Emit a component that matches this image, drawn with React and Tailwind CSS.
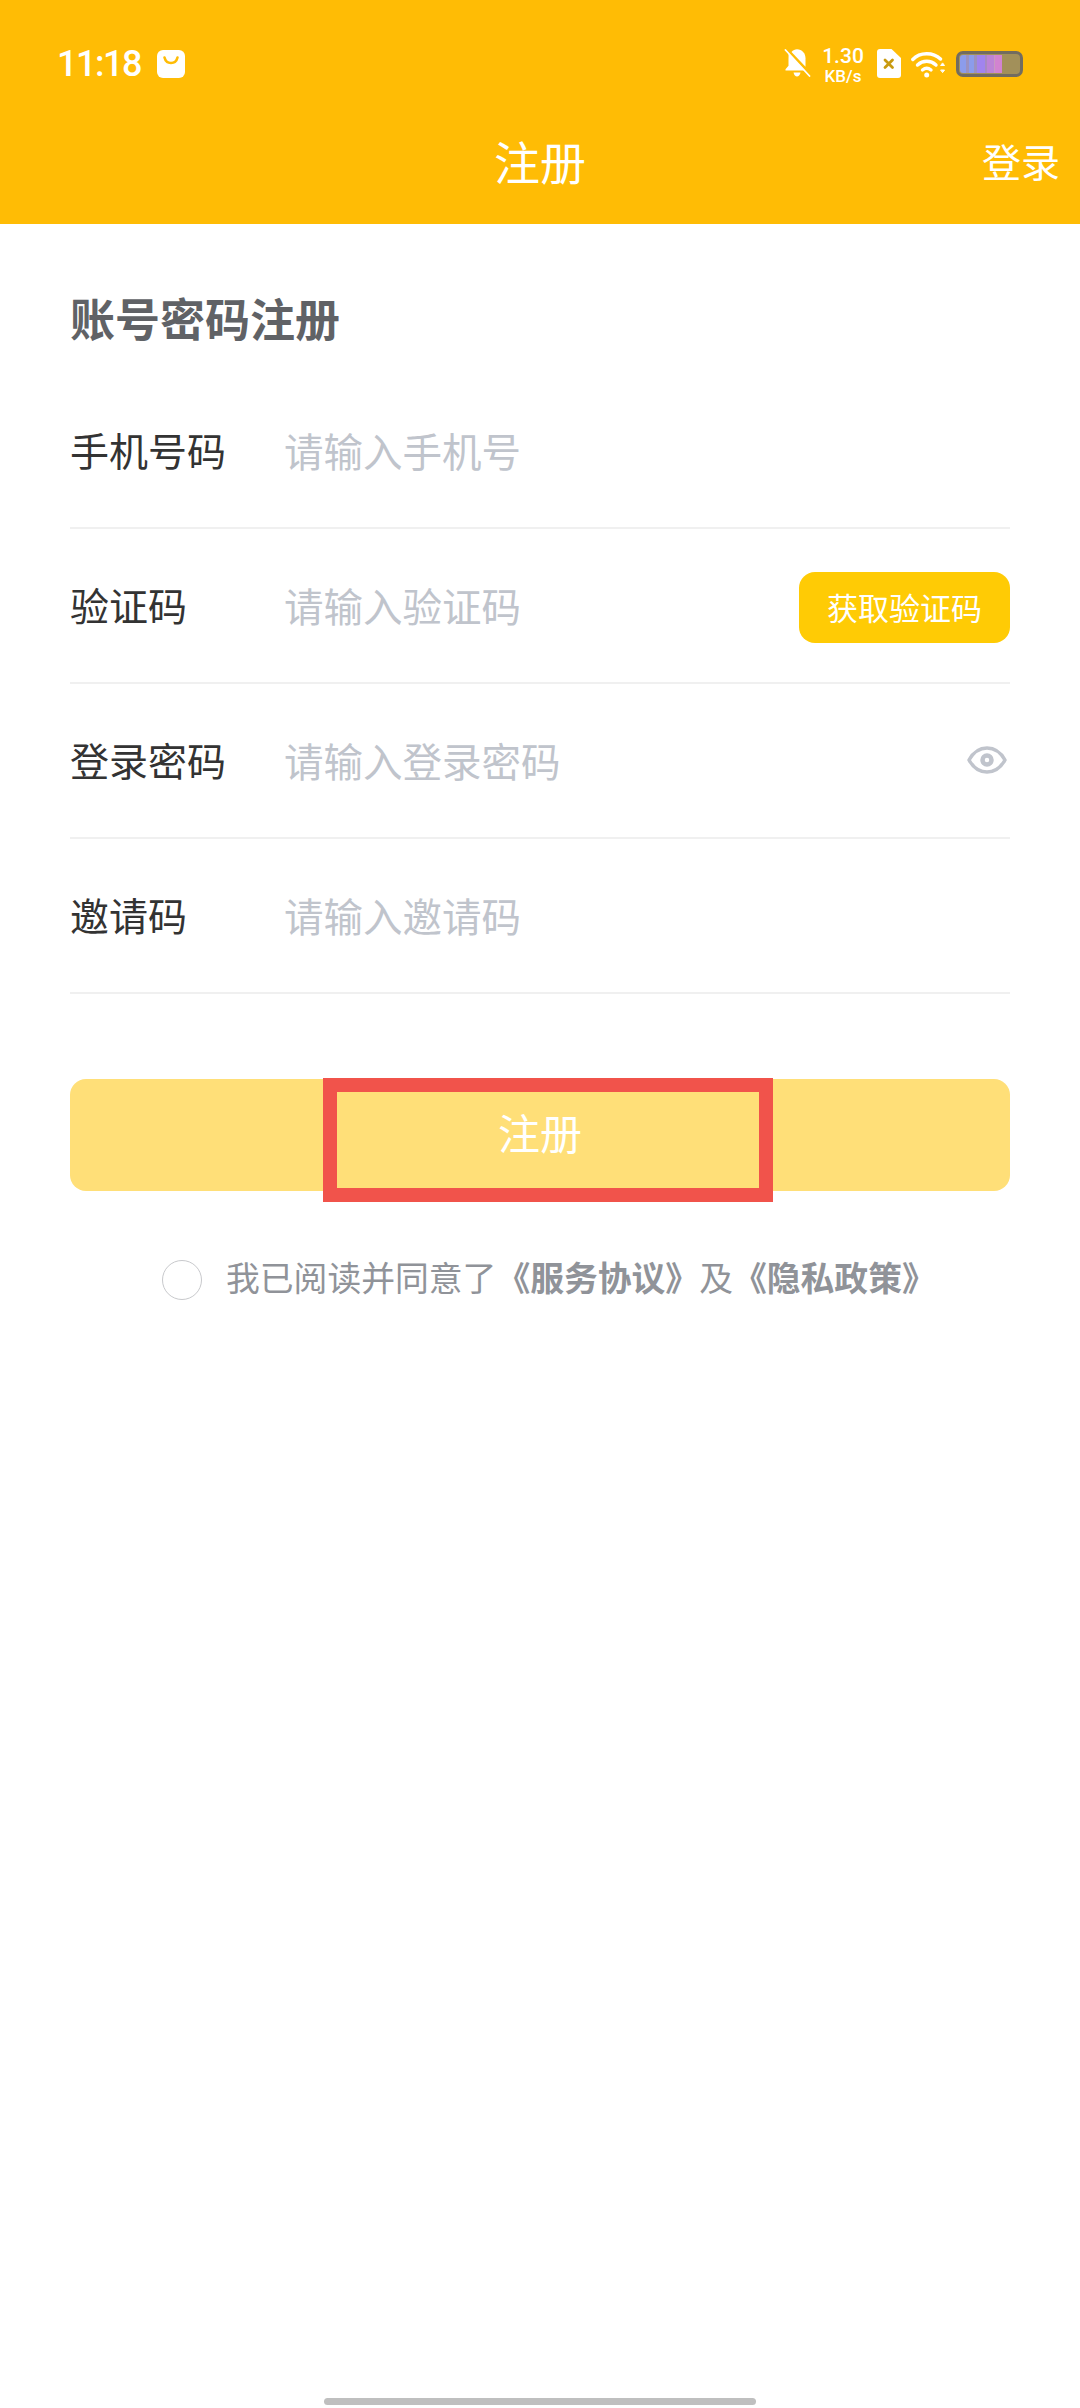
import React from 'react';

const FONT = '"Noto Sans CJK SC", "Noto Sans", sans-serif';

const BagIcon = () => (
  <svg width="28" height="28" viewBox="0 0 28 28">
    <rect width="28" height="28" rx="6" fill="#fff" />
    <path d="M7.500 7.500c1 4 3.500 5.500 6.500 5.500s5.500-1.500 6.500-5.500" fill="none" stroke="#FFBC05" strokeWidth="2.600" strokeLinecap="round" />
  </svg>
);

const BellOff = () => (
  <svg width="27" height="29" viewBox="0 0 27 29">
    <path d="M4.500 4.500 21 21.500H1.500v-1.300l3-3.500V10c0-2 .2-3.800 0-5.500Z" fill="#fff" />
    <path d="M7.500 3C9 1.200 11 .3 13 .3c5 0 8.500 4 8.500 9v8.500Z" fill="#fff" />
    <path d="M9.500 23.500h7c-.5 2.500-2 4-3.500 4s-3-1.500-3.500-4Z" fill="#fff" />
    <path d="M1.500 1 25.500 27" stroke="#fff" strokeWidth="1.800" strokeLinecap="round" />
  </svg>
);

const SimIcon = () => (
  <svg width="24" height="29" viewBox="0 0 24 29">
    <path d="M3 0h11.500L24 9v17a3 3 0 0 1-3 3H3a3 3 0 0 1-3-3V3a3 3 0 0 1 3-3Z" fill="#fff" />
    <path d="M8 11l7.500 7.500M15.500 11 8 18.500" stroke="#C89A10" strokeWidth="2.800" strokeLinecap="round" />
  </svg>
);

const WifiIcon = () => (
  <svg width="34" height="28" viewBox="0 0 34 28" fill="none" stroke="#fff" strokeLinecap="round">
    <path d="M1.800 9.500C9 2 22 2 29.500 9" strokeWidth="3.400" />
    <path d="M6.500 15c5.500-5 13-5 18.500 0" strokeWidth="3.400" />
    <path d="M11.500 20c3-2.500 5.500-2.500 8.500 0" strokeWidth="3.400" />
    <circle cx="15.700" cy="25" r="2.500" fill="#fff" stroke="none" />
    <path d="M30 15.500h3.500l-1.700-2.300ZM30 20h3.500l-1.700 2.300Z" fill="#fff" stroke="#fff" strokeWidth="1" />
  </svg>
);

const Battery = () => (
  <div className="flex h-[26px] w-[67px] items-stretch overflow-hidden rounded-[7px] border-[3px] border-[#726C60] bg-[#A2905A] p-[1px]">
    <div className="w-[6px] rounded-l-[3px] bg-[#8C9CEB]" />
    <div className="w-[3px] bg-[#9B92C0]" />
    <div className="w-[5px] bg-[#8C9CEB]" />
    <div className="w-[3px] bg-[#9B92C0]" />
    <div className="w-[8px] bg-[#A184EE]" />
    <div className="w-[2px] bg-[#A78BC0]" />
    <div className="w-[7px] bg-[#BC84D6]" />
    <div className="w-[1px] bg-[#C79BC0]" />
    <div className="w-[7px] bg-[#D283D0]" />
  </div>
);

const Eye = () => (
  <svg width="40" height="28" viewBox="0 0 40 28" fill="none" stroke="#C0C4CC">
    <path d="M2 14C6.500 6 12.500 2 20 2s13.500 4 18 12C33.500 22 27.500 26 20 26S6.500 22 2 14Z" strokeWidth="3.500" strokeLinejoin="round" />
    <circle cx="20" cy="14" r="4.500" strokeWidth="4.500" />
  </svg>
);

const Row = ({ label, hint, children }) => (
  <div className="flex h-[155px] items-center border-b-2 border-[#F0F0F0] pb-[2px]">
    <span className="w-[214px] text-[39px] text-[#333333]">{label}</span>
    <span className="flex-1 text-[39.500px] text-[#C0C4CC]">{hint}</span>
    {children}
  </div>
);

export default function App() {
  return (
    <div className="relative flex h-[2408px] w-[1080px] flex-col overflow-hidden bg-white" style={{ fontFamily: FONT }}>
      <header className="flex h-[224px] flex-col bg-[#FFBC05] text-white">
        <div className="flex h-[78px] items-end justify-between px-[57px]">
          <div className="flex items-center gap-[16px]">
            <span className="text-[36px] font-medium leading-[28px] tracking-[-1.500px]" style={{ fontFamily: 'Roboto, sans-serif' }}>11:18</span>
            <BagIcon />
          </div>
          <div className="flex h-[29px] items-center">
            <BellOff />
            <div className="ml-[11px] mt-[4px] flex w-[42px] flex-col items-center font-medium" style={{ fontFamily: 'Roboto, sans-serif' }}>
              <span className="text-[21px] leading-[20px]">1.30</span>
              <span className="text-[17px] leading-[20px]">KB/s</span>
            </div>
            <div className="ml-[13px]"><SimIcon /></div>
            <div className="ml-[10px]"><WifiIcon /></div>
            <div className="ml-[11px]"><Battery /></div>
          </div>
        </div>
        <div className="grid flex-1 grid-cols-[1fr_auto_1fr] items-center pt-[18px]">
          <span />
          <span className="text-[46px]">注册</span>
          <span className="mr-[20px] justify-self-end text-[39px]">登录</span>
        </div>
      </header>

      <main className="flex flex-col px-[70px]">
        <h1 className="mt-[64px] text-[45px] font-bold leading-[60px] text-[#606266]">账号密码注册</h1>
        <div className="mt-[26px] flex flex-col">
          <Row label="手机号码" hint="请输入手机号" />
          <Row label="验证码" hint="请输入验证码">
            <button className="mt-[6px] flex h-[71px] w-[211px] items-center justify-center rounded-[16px] bg-[#FFCB05] text-[31px] text-white">获取验证码</button>
          </Row>
          <Row label="登录密码" hint="请输入登录密码">
            <div className="mr-[3px]"><Eye /></div>
          </Row>
          <Row label="邀请码" hint="请输入邀请码" />
        </div>
        <button className="relative mt-[85px] flex h-[112px] items-center justify-center rounded-[16px] bg-[#FFDF78] pb-[8px] text-[42px] text-white">
          注册
          <span className="absolute left-[253px] top-[-1px] h-[124px] w-[450px] border-[14px] border-[#F1534B]" />
        </button>
        <div className="mt-[61px] flex items-center pl-[92px]">
          <span className="h-[40px] w-[40px] shrink-0 rounded-full border border-[#C8C9CC]" />
          <p className="ml-[24px] mb-[6px] whitespace-nowrap text-[33.800px] text-[#909399]">
            我已阅读并同意了<b className="font-bold">《服务协议》</b>及<b className="font-bold">《隐私政策》</b>
          </p>
        </div>
      </main>

      <div className="absolute bottom-[3px] left-[324px] h-[7px] w-[432px] rounded-full bg-[#BFBFBF]" />
    </div>
  );
}
